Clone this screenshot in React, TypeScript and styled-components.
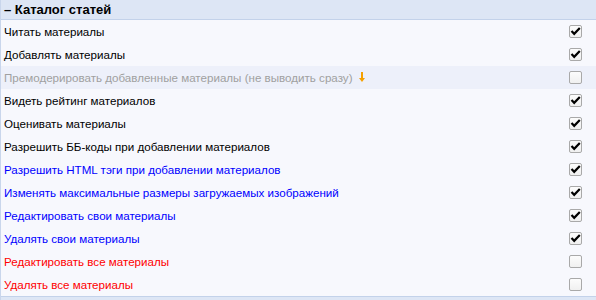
import styled, { createGlobalStyle } from "styled-components";

const GlobalStyle = createGlobalStyle`
  html, body {
    margin: 0;
    padding: 0;
    background: #f7f8fd;
  }
  body {
    font-family: "Liberation Sans", Arial, sans-serif;
    font-size: 11.6px;
  }
`;

type Tone = "normal" | "muted" | "blue" | "red";

const toneColors: Record<Tone, string> = {
  normal: "#000000",
  muted: "#a0a0a0",
  blue: "#0000ff",
  red: "#ff0000",
};

const perms: { label: string; tone: Tone; checked: boolean; hint?: boolean }[] = [
  { label: "Читать материалы", tone: "normal", checked: true },
  { label: "Добавлять материалы", tone: "normal", checked: true },
  {
    label: "Премодерировать добавленные материалы (не выводить сразу)",
    tone: "muted",
    checked: false,
    hint: true,
  },
  { label: "Видеть рейтинг материалов", tone: "normal", checked: true },
  { label: "Оценивать материалы", tone: "normal", checked: true },
  { label: "Разрешить ББ-коды при добавлении материалов", tone: "normal", checked: true },
  { label: "Разрешить HTML тэги при добавлении материалов", tone: "blue", checked: true },
  { label: "Изменять максимальные размеры загружаемых изображений", tone: "blue", checked: true },
  { label: "Редактировать свои материалы", tone: "blue", checked: true },
  { label: "Удалять свои материалы", tone: "blue", checked: true },
  { label: "Редактировать все материалы", tone: "red", checked: false },
  { label: "Удалять все материалы", tone: "red", checked: false },
];

const Panel = styled.section`
  width: 596px;
  height: 300px;
  display: flex;
  flex-direction: column;
  border-left: 1px solid #c9d6ec;
  box-sizing: border-box;
  background: #f7f8fd;
  overflow: hidden;
`;

const Header = styled.div`
  height: 19px;
  display: flex;
  align-items: center;
  padding-left: 3px;
  background: #dde6f5;
  border-bottom: 1px solid #c3d2ea;
  font-weight: bold;
  font-size: 13px;
  color: #000;
`;

const Row = styled.div<{ $highlight?: boolean }>`
  height: 23px;
  display: flex;
  align-items: center;
  justify-content: space-between;
  padding: 0 14px 0 3px;
  background: ${(p) => (p.$highlight ? "#edf0fa" : "transparent")};
`;

const Label = styled.span<{ $tone: Tone }>`
  color: ${(p) => toneColors[p.$tone]};
  white-space: nowrap;
  display: flex;
  align-items: center;
  gap: 6px;
`;

const Box = styled.span`
  width: 13px;
  height: 13px;
  box-sizing: border-box;
  border: 1px solid #a9a9a9;
  border-radius: 2px;
  background: linear-gradient(#fcfcfc, #f0f0f0);
  display: flex;
  align-items: center;
  justify-content: center;
`;

const Footer = styled.div`
  flex: 1;
  background: #dde6f5;
  border-top: 1px solid #c3d2ea;
`;

function Check({ checked }: { checked: boolean }) {
  return (
    <Box>
      {checked && (
        <svg width="11" height="11" viewBox="0 0 11 11">
          <path d="M1.5 5 L4.2 7.8 L9.8 2" fill="none" stroke="#000" strokeWidth="2.2" />
        </svg>
      )}
    </Box>
  );
}

function HintIcon() {
  return (
    <svg width="6" height="11" viewBox="0 0 6 11">
      <rect x="2" y="0" width="2" height="7" fill="#f5a000" />
      <path d="M0 6 L6 6 L3 10 Z" fill="#f5a000" />
    </svg>
  );
}

export default function App() {
  return (
    <>
      <GlobalStyle />
      <Panel>
        <Header>– Каталог статей</Header>
        {perms.map((p) => (
          <Row key={p.label} $highlight={p.tone === "muted"}>
            <Label $tone={p.tone}>
              {p.label}
              {p.hint && <HintIcon />}
            </Label>
            <Check checked={p.checked} />
          </Row>
        ))}
        <Footer />
      </Panel>
    </>
  );
}
